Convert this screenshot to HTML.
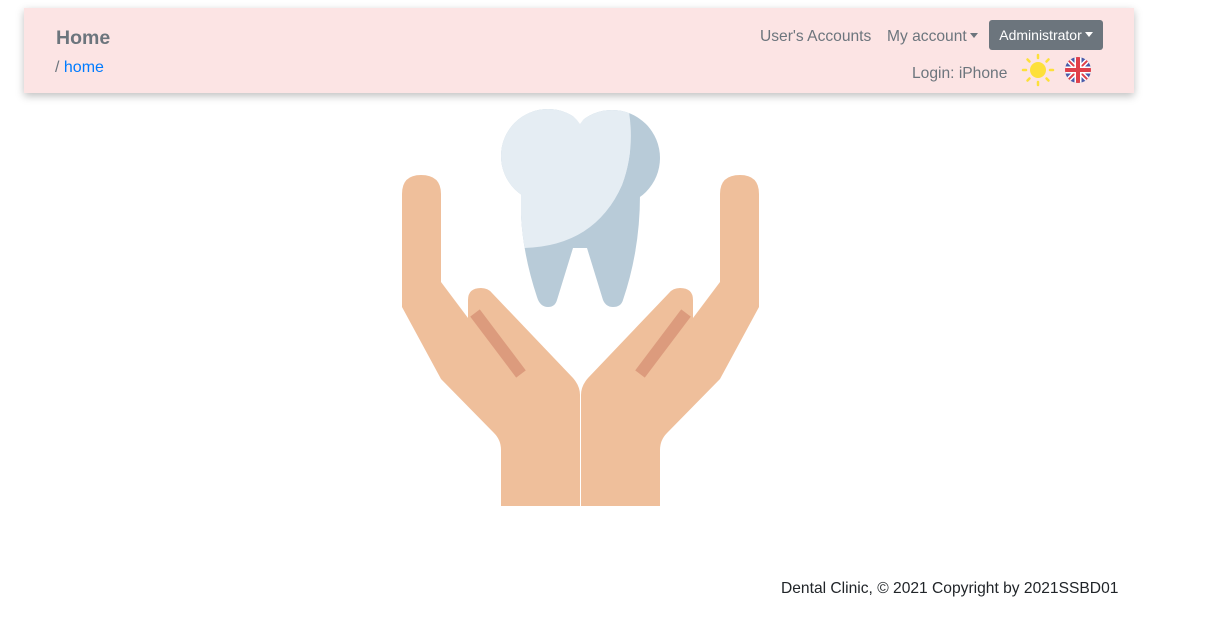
<!DOCTYPE html>
<html><head><meta charset="utf-8"><style>
*{margin:0;padding:0;box-sizing:border-box}
body{width:1216px;height:632px;background:#fff;font-family:"Liberation Sans",sans-serif;position:relative;overflow:hidden}
.hdr{position:absolute;left:24px;top:8px;width:1110px;height:85px;background:#fce4e4;box-shadow:0 3px 8px rgba(0,0,0,.25)}
.t{position:absolute;white-space:nowrap}
.caret{display:inline-block;width:0;height:0;border-left:4px solid transparent;border-right:4px solid transparent;border-top:5px solid currentColor;vertical-align:3px;margin-left:3px}
</style></head><body>
<div class="hdr"></div>
<div class="t" style="left:56px;top:27px;font-size:19.5px;font-weight:bold;color:#6c757d">Home</div>
<div class="t" style="left:55px;top:59px;font-size:16px;color:#6c757d">/ <span style="color:#007bff">home</span></div>
<div class="t" style="left:760px;top:28px;font-size:15.6px;color:#6c757d">User's Accounts</div>
<div class="t" style="left:887px;top:28px;font-size:15.6px;color:#6c757d">My account<span class="caret"></span></div>
<div style="position:absolute;left:989px;top:20px;width:114px;height:30px;background:#6c757d;border-radius:3px;color:#fff;font-size:14px;line-height:31px;text-align:center">Administrator<span class="caret"></span></div>
<div class="t" style="left:912px;top:65px;font-size:15.6px;color:#6c757d">Login: iPhone</div>
<svg style="position:absolute;left:1021px;top:53px" width="34" height="34" viewBox="0 0 34 34">
<circle cx="17" cy="17" r="8" fill="#fde03a"/>
<g stroke="#fde03a" stroke-width="2.5" stroke-linecap="round">
<line x1="17" y1="2" x2="17" y2="5"/><line x1="17" y1="29" x2="17" y2="32"/><line x1="2" y1="17" x2="5" y2="17"/><line x1="29" y1="17" x2="32" y2="17"/>
<line x1="6.5" y1="6.5" x2="8.5" y2="8.5"/><line x1="25.5" y1="25.5" x2="27.5" y2="27.5"/><line x1="6.5" y1="27.5" x2="8.5" y2="25.5"/><line x1="25.5" y1="8.5" x2="27.5" y2="6.5"/></g></svg>
<svg style="position:absolute;left:1065px;top:57px" width="26" height="26" viewBox="0 0 26 26">
<defs><clipPath id="c"><circle cx="13" cy="13" r="13"/></clipPath></defs>
<g clip-path="url(#c)"><rect width="26" height="26" fill="#4a5aa8"/>
<path d="M0 0L26 26M26 0L0 26" stroke="#fff" stroke-width="5"/>
<path d="M0 0L26 26M26 0L0 26" stroke="#e0404a" stroke-width="2"/>
<rect x="9.5" y="0" width="7" height="26" fill="#fff"/><rect x="0" y="9.5" width="26" height="7" fill="#fff"/>
<rect x="11" y="0" width="4" height="26" fill="#e0404a"/><rect x="0" y="11" width="26" height="4" fill="#e0404a"/></g></svg>
<svg style="position:absolute;left:0;top:0" width="1216" height="632" viewBox="0 0 1216 632">
<defs>
<g id="tooth">
<circle cx="548" cy="156" r="47"/>
<circle cx="612" cy="158" r="48"/>
<path d="M530,150 L630,150 L640,195 Q640,250 623,300 Q621,307 613,307 Q606,307 603,300 L587,248 L573,248 L557,300 Q555,307 548,307 Q540,307 537,297 Q523,255 521,215 L521,195 Z"/>
</g>
<clipPath id="lc"><path d="M0,0 L629,0 L629,112 Q635,150 622,185 Q595,246 524,248 L0,248 Z"/></clipPath>
</defs>
<g id="h">
<path d="M402,194 Q402,175 421,175 Q441,175 441,194 L441,282 L468,318 L468,300 Q468,288 481,288 Q488,288 492,293 L573,378 Q580,386 580,395 L580,506 L501,506 L501,450 Q501,440 494,433 L441,379 L402,307 Z" fill="#efbf9b"/>
<line x1="475" y1="313" x2="521" y2="374" stroke="#dc9b7d" stroke-width="12"/>
</g>
<use href="#h" transform="translate(1161,0) scale(-1,1)"/>
<use href="#tooth" fill="#b8cbd8"/>
<g clip-path="url(#lc)"><use href="#tooth" fill="#e5edf3"/></g>
<path d="M564,110 Q575,116 580,124 Q585,116 596,110 Z" fill="#fff"/>
</svg>
<div class="t" style="left:781px;top:580px;font-size:15.6px;color:#212529">Dental Clinic, © 2021 Copyright by 2021SSBD01</div>
</body></html>
